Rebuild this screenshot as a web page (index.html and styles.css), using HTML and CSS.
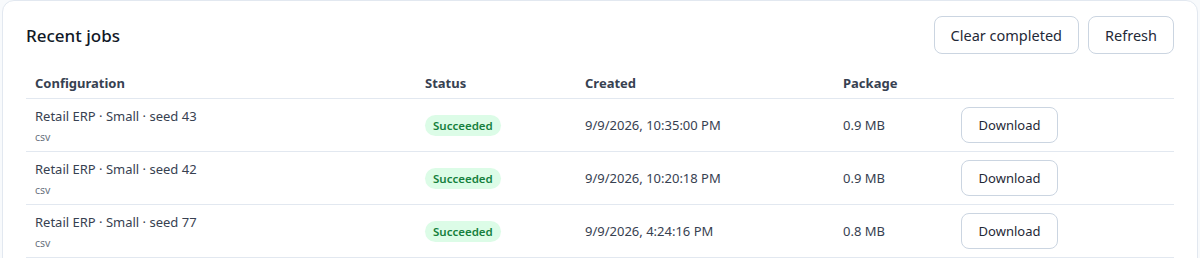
FILE: index.html
```html
<!DOCTYPE html>
<html lang="en">
<head>
  <meta charset="UTF-8" />
  <meta name="viewport" content="width=device-width, initial-scale=1.0">
  <title>Recent jobs</title>
  <link rel="stylesheet" href="styles.css">
</head>
<body>

  <section class="card">
    <div class="card-head">
      <h2 class="title">Recent jobs</h2>
      <div class="actions">
        <button class="btn">Clear completed</button>
        <button class="btn">Refresh</button>
      </div>
    </div>

    <table class="jobs">
      <thead>
        <tr>
          <th class="c-config">Configuration</th>
          <th class="c-status">Status</th>
          <th class="c-created">Created</th>
          <th class="c-package">Package</th>
          <th></th>
        </tr>
      </thead>
      <tbody>
        <tr>
          <td>
            <div class="config">Retail ERP · Small · seed 43</div>
            <div class="fmt">csv</div>
          </td>
          <td><span class="badge">Succeeded</span></td>
          <td>9/9/2026, 10:35:00 PM</td>
          <td>0.9 MB</td>
          <td><button class="btn btn-sm">Download</button></td>
        </tr>
        <tr>
          <td>
            <div class="config">Retail ERP · Small · seed 42</div>
            <div class="fmt">csv</div>
          </td>
          <td><span class="badge">Succeeded</span></td>
          <td>9/9/2026, 10:20:18 PM</td>
          <td>0.9 MB</td>
          <td><button class="btn btn-sm">Download</button></td>
        </tr>
        <tr>
          <td>
            <div class="config">Retail ERP · Small · seed 77</div>
            <div class="fmt">csv</div>
          </td>
          <td><span class="badge">Succeeded</span></td>
          <td>9/9/2026, 4:24:16 PM</td>
          <td>0.8 MB</td>
          <td><button class="btn btn-sm">Download</button></td>
        </tr>
      </tbody>
    </table>
  </section>

</body>
</html>
```

FILE: styles.css
```css
body {
  font-family: "Noto Sans", "Open Sans", Arial, sans-serif;
  margin: 0; padding: 0 2px; background-color: #f8fafc; color: #1f2937;
}
.card {
  background: #fff; border: 1px solid #e2e8f0; border-radius: 12px;
  padding: 15px 23px 24px 23px;
}
.card-head { display: flex; justify-content: space-between; align-items: center; }
.title { font-size: 17px; font-weight: 500; margin: 0; color: #111827; }
.actions { display: flex; gap: 9px; }
.btn {
  font-family: inherit; font-size: 14.5px; color: #1f2937; background: #fff;
  border: 1px solid #cbd5e1; border-radius: 8px; height: 38px; padding: 0 16px;
  cursor: pointer;
}
.btn-sm { font-size: 13px; height: 36px; width: 97px; padding: 0; }

.jobs { width: 100%; border-collapse: collapse; margin-top: 12px; font-size: 13px; }
.jobs th {
  text-align: left; font-weight: 700; color: #374151; font-size: 13px;
  padding: 8px 9px 6px; border-bottom: 1px solid #e2e8f0;
}
.jobs td { padding: 0 9px; height: 52px; border-bottom: 1px solid #e2e8f0; color: #374151; }
.c-config { width: 372px; }
.c-status { width: 142px; }
.c-created { width: 240px; }
.c-package { width: 100px; }
.config { font-size: 13px; color: #374151; }
.fmt { font-size: 10.5px; color: #6b7280; margin-top: 5px; }
.badge {
  display: inline-block; background: #dcfce7; color: #15803d; font-size: 11.5px;
  font-weight: 600; padding: 3px 8px; border-radius: 999px;
}
```
